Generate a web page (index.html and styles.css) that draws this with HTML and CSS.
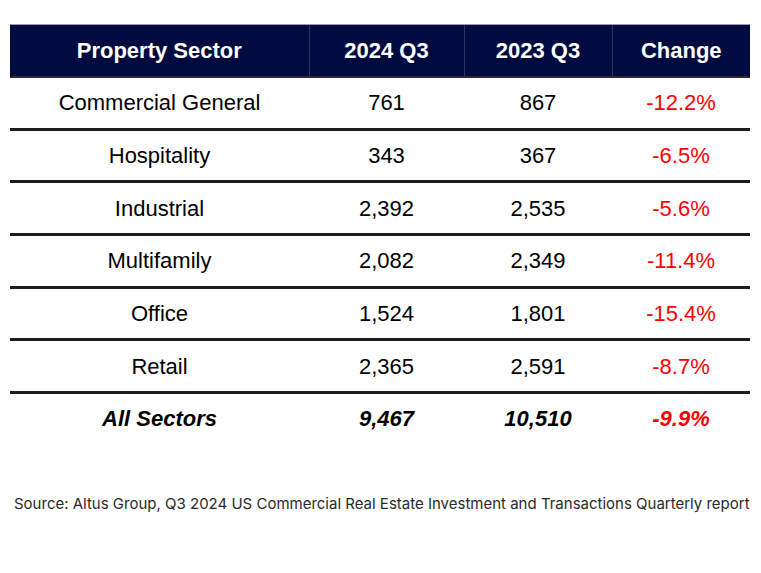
FILE: index.html
```html
<!DOCTYPE html>
<html>
<head>
<meta charset="utf-8">
<link rel="stylesheet" href="styles.css">
</head>
<body>
<div class="page">
<table class="data">
  <colgroup>
    <col class="c1"><col class="c2"><col class="c3"><col class="c4">
  </colgroup>
  <thead>
    <tr><th>Property Sector</th><th>2024 Q3</th><th>2023 Q3</th><th>Change</th></tr>
  </thead>
  <tbody>
    <tr><td>Commercial General</td><td>761</td><td>867</td><td class="neg">-12.2%</td></tr>
    <tr><td>Hospitality</td><td>343</td><td>367</td><td class="neg">-6.5%</td></tr>
    <tr><td>Industrial</td><td>2,392</td><td>2,535</td><td class="neg">-5.6%</td></tr>
    <tr><td>Multifamily</td><td>2,082</td><td>2,349</td><td class="neg">-11.4%</td></tr>
    <tr><td>Office</td><td>1,524</td><td>1,801</td><td class="neg">-15.4%</td></tr>
    <tr><td>Retail</td><td>2,365</td><td>2,591</td><td class="neg">-8.7%</td></tr>
    <tr class="total"><td>All Sectors</td><td>9,467</td><td>10,510</td><td class="neg">-9.9%</td></tr>
  </tbody>
</table>
<p class="source">Source: Altus Group, Q3 2024 US Commercial Real Estate Investment and Transactions Quarterly report</p>
</div>
</body>
</html>
```
FILE: styles.css
```css
html, body { margin: 0; padding: 0; background: #fff; }
.page { padding: 24px 0 0 10px; }
.data {
  border-collapse: collapse;
  width: 740px;
  table-layout: fixed;
  font-family: "Liberation Sans", Arial, sans-serif;
  font-size: 22px;
  color: #000;
}
.c1 { width: 299px; }
.c2 { width: 155px; }
.c3 { width: 148px; }
.c4 { width: 138px; }
.data th {
  background: #020b3f;
  color: #fff;
  font-weight: bold;
  height: 51px;
  padding: 0;
  border-top: 1px solid #9a9ca8;
  border-bottom: 2px solid #2b2b2b;
  border-left: 1px solid #2a3563;
  text-align: center;
}
.data th:first-child { border-left: none; }
.data td {
  height: 48.7px;
  padding: 1px 0 0;
  text-align: center;
  border-bottom: 3px solid #1e1e1e;
}
.data tr.total td {
  border-bottom: none;
  font-weight: bold;
  font-style: italic;
}
.neg { color: #ff0000; }
.source {
  margin: 50px 0 0 4px;
  font-family: Inter, "Noto Sans", sans-serif;
  font-size: 15px;
  color: #2a2a2a;
}
```
